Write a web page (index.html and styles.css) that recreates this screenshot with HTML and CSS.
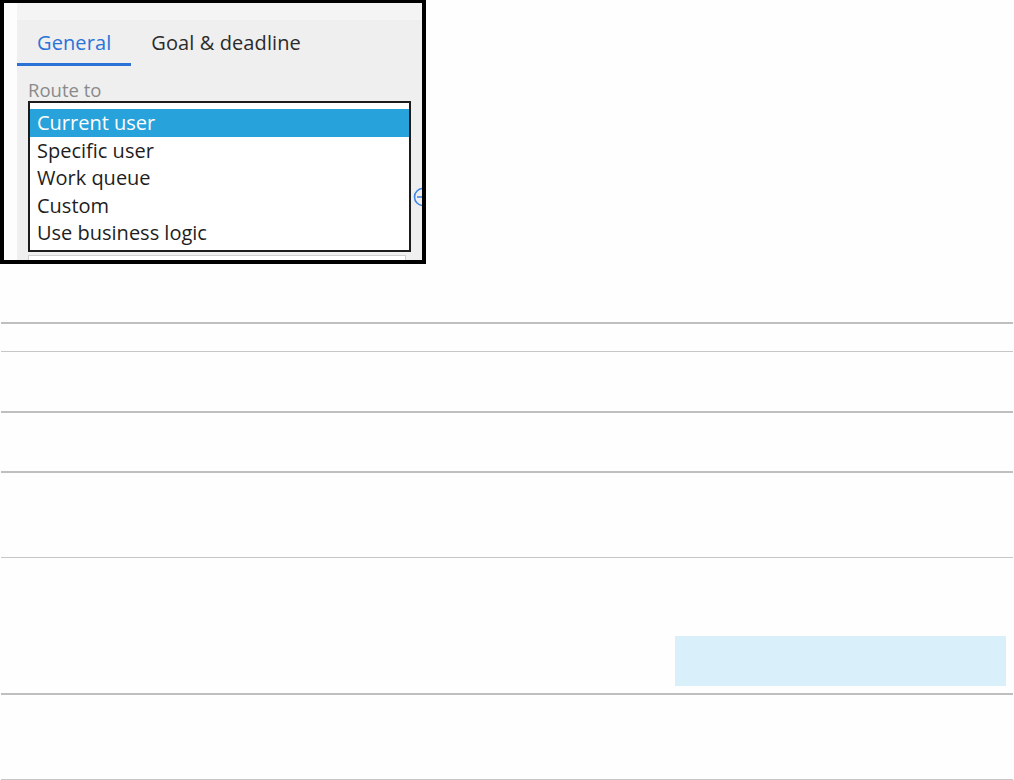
FILE: index.html
```html
<!DOCTYPE html>
<html lang="en">
<head>
<meta charset="utf-8">
<title>Route to</title>
<link rel="stylesheet" href="styles.css">
</head>
<body>
<div class="shot">
  <div class="gutter"></div>
  <div class="panel">
    <div class="topband"></div>
    <div class="tabs">
      <div class="tab active">General</div>
      <div class="tab">Goal &amp; deadline</div>
    </div>
    <div class="field-label">Route to</div>
    <div class="listbox">
      <div class="option selected">Current user</div>
      <div class="option">Specific user</div>
      <div class="option">Work queue</div>
      <div class="option">Custom</div>
      <div class="option">Use business logic</div>
    </div>
    <div class="next-field"></div>
    <svg class="edge-icon" width="20" height="20" viewBox="0 0 20 20"><circle cx="10" cy="10" r="8.5" fill="none" stroke="#3f86e8" stroke-width="1.6"/><line x1="4" y1="10" x2="16" y2="10" stroke="#3f86e8" stroke-width="1.6"/></svg>
  </div>
</div>

<div class="table">
  <div class="row r1"></div>
  <div class="row r2"></div>
  <div class="row r3"></div>
  <div class="row r4"></div>
  <div class="row r5"><div class="hl-box"></div></div>
  <div class="row r6"></div>
  <div class="row r7"></div>
</div>
</body>
</html>
```

FILE: styles.css
```css
html, body {
  margin: 0;
  padding: 0;
  background: #fefefe;
}
body {
  font-family: "Open Sans", "Noto Sans", sans-serif;
  color: #222;
}
.shot {
  width: 418px;
  height: 257px;
  border: 4px solid #000;
  border-top-width: 3px;
  display: flex;
  overflow: hidden;
  background: #fff;
}
.gutter {
  width: 13px;
  flex: none;
  background: #fdfdfd;
}
.panel {
  position: relative;
  flex: 1;
  background: #efefef;
  padding: 0 11px;
  overflow: hidden;
  display: flex;
  flex-direction: column;
}
.topband {
  height: 17px;
  margin: 0 -11px;
  background: #f4f4f4;
  flex: none;
}
.tabs {
  display: flex;
  margin-left: -11px;
  flex: none;
}
.tab {
  padding: 11px 20px 8px;
  line-height: 24px;
  font-size: 20px;
  letter-spacing: 0.1px;
  color: #2b2b2b;
  border-bottom: 3px solid transparent;
}
.tab.active {
  color: #2a74d8;
  border-bottom-color: #2a72d6;
}
.field-label {
  margin-top: 13px;
  font-size: 18.5px;
  line-height: 22px;
  color: #8a8a8a;
}
.listbox {
  border: 2px solid #1c1c1c;
  background: #fff;
  padding: 6px 0 3px;
  flex: none;
}
.option {
  font-size: 20px;
  line-height: 27.6px;
  padding-left: 7px;
  color: #1e1e1e;
}
.option.selected {
  background: #27a2db;
  color: #fff;
}
.next-field {
  margin-top: 3px;
  margin-right: 5px;
  height: 30px;
  border: 1px solid #cfcfcf;
  background: #fff;
  flex: none;
}
.edge-icon {
  position: absolute;
  left: 396px;
  top: 184px;
}
.table {
  margin-top: 58px;
}
.row {
  box-sizing: border-box;
  margin: 0 1px;
  border-top: 2px solid #bfbfbf;
}
.r1 { height: 29px; }
.r2 { height: 60px; border-top-width: 1px; border-top-color: #c6c6c6; }
.r3 { height: 60px; }
.r4 { height: 86px; }
.r5 {
  height: 136px;
  border-top-width: 1px;
  border-top-color: #c6c6c6;
  display: flex;
  justify-content: flex-end;
  align-items: flex-end;
  padding: 0 7px 7px 0;
}
.r6 { height: 86px; }
.r7 { height: 1px; border-top-width: 1px; border-top-color: #c6c6c6; }
.hl-box {
  width: 331px;
  height: 50px;
  background: #d9f0fb;
}
```
